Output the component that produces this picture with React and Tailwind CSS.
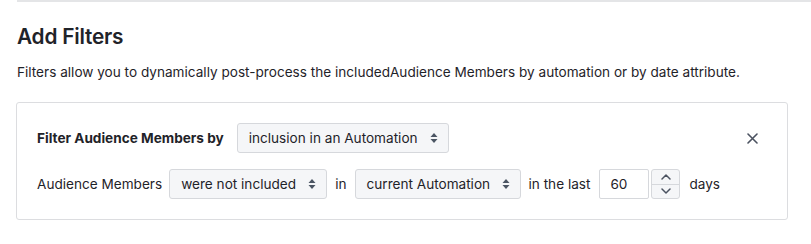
import React from "react";

function Caret() {
  return (
    <svg width="8" height="12" viewBox="0 0 8 12" className="ml-3 shrink-0">
      <path d="M4 1 L7.5 5 H0.5 Z" fill="#4b5563" />
      <path d="M4 11 L7.5 7 H0.5 Z" fill="#4b5563" />
    </svg>
  );
}

function Select({ label, w }) {
  return (
    <div
      className={`flex h-[30px] items-center justify-between rounded-[3px] border border-[#d6d8dc] bg-[#f5f6f8] pl-[11px] pr-[14px] ${w}`}
    >
      <span className="whitespace-nowrap">{label}</span>
      <Caret />
    </div>
  );
}

export default function App() {
  return (
    <div
      className="h-[244px] w-[811px] bg-white text-[#1f2329]"
      style={{ fontFamily: "Inter, 'Liberation Sans', sans-serif" }}
    >
      <div className="ml-[17px] border-t-2 border-[#e4e5e7]" />
      <div className="pl-[17px]">
        <h2 className="mt-[22px] text-[20.8px] font-semibold leading-[26px] tracking-[-0.2px]">
          Add Filters
        </h2>
        <p className="mt-[13px] text-[13.6px] leading-[18px]">
          Filters allow you to dynamically post-process the includedAudience Members by automation or by date attribute.
        </p>
      </div>
      <div className="ml-[16px] mt-[21px] w-[772px] rounded-[3px] border border-[#dcdde0] px-[20px] pt-[20px] pb-[20px] text-[13.6px]">
        <div className="flex h-[30px] items-center">
          <span className="font-bold">Filter Audience Members by</span>
          <div className="ml-[13px]">
            <Select label="inclusion in an Automation" w="w-[212px]" />
          </div>
          <div className="flex-1" />
          <svg width="11" height="11" viewBox="0 0 11 11" className="mr-[9px]">
            <path d="M1 1 L10 10 M10 1 L1 10" stroke="#4b5260" strokeWidth="1.6" strokeLinecap="round" />
          </svg>
        </div>
        <div className="mt-[16px] flex h-[30px] items-center">
          <span>Audience Members</span>
          <div className="ml-[7px]">
            <Select label="were not included" w="w-[158px]" />
          </div>
          <span className="ml-[8px]">in</span>
          <div className="ml-[8px]">
            <Select label="current Automation" w="w-[166px]" />
          </div>
          <span className="ml-[8px]">in the last</span>
          <div className="ml-[9px] flex h-[30px] w-[50px] items-center rounded-[2px] border border-[#d6d8dc] bg-white pl-[10px]">
            60
          </div>
          <div className="ml-[2px] flex h-[30px] w-[29px] flex-col overflow-hidden rounded-[3px] border border-[#d6d8dc] bg-[#f5f6f8]">
            <div className="flex flex-1 items-center justify-center border-b border-[#d6d8dc]">
              <svg width="10" height="6" viewBox="0 0 10 6">
                <path d="M1 5 L5 1 L9 5" stroke="#4b5260" strokeWidth="1.5" fill="none" strokeLinecap="round" strokeLinejoin="round" />
              </svg>
            </div>
            <div className="flex flex-1 items-center justify-center">
              <svg width="10" height="6" viewBox="0 0 10 6">
                <path d="M1 1 L5 5 L9 1" stroke="#4b5260" strokeWidth="1.5" fill="none" strokeLinecap="round" strokeLinejoin="round" />
              </svg>
            </div>
          </div>
          <span className="ml-[9px]">days</span>
        </div>
      </div>
    </div>
  );
}
